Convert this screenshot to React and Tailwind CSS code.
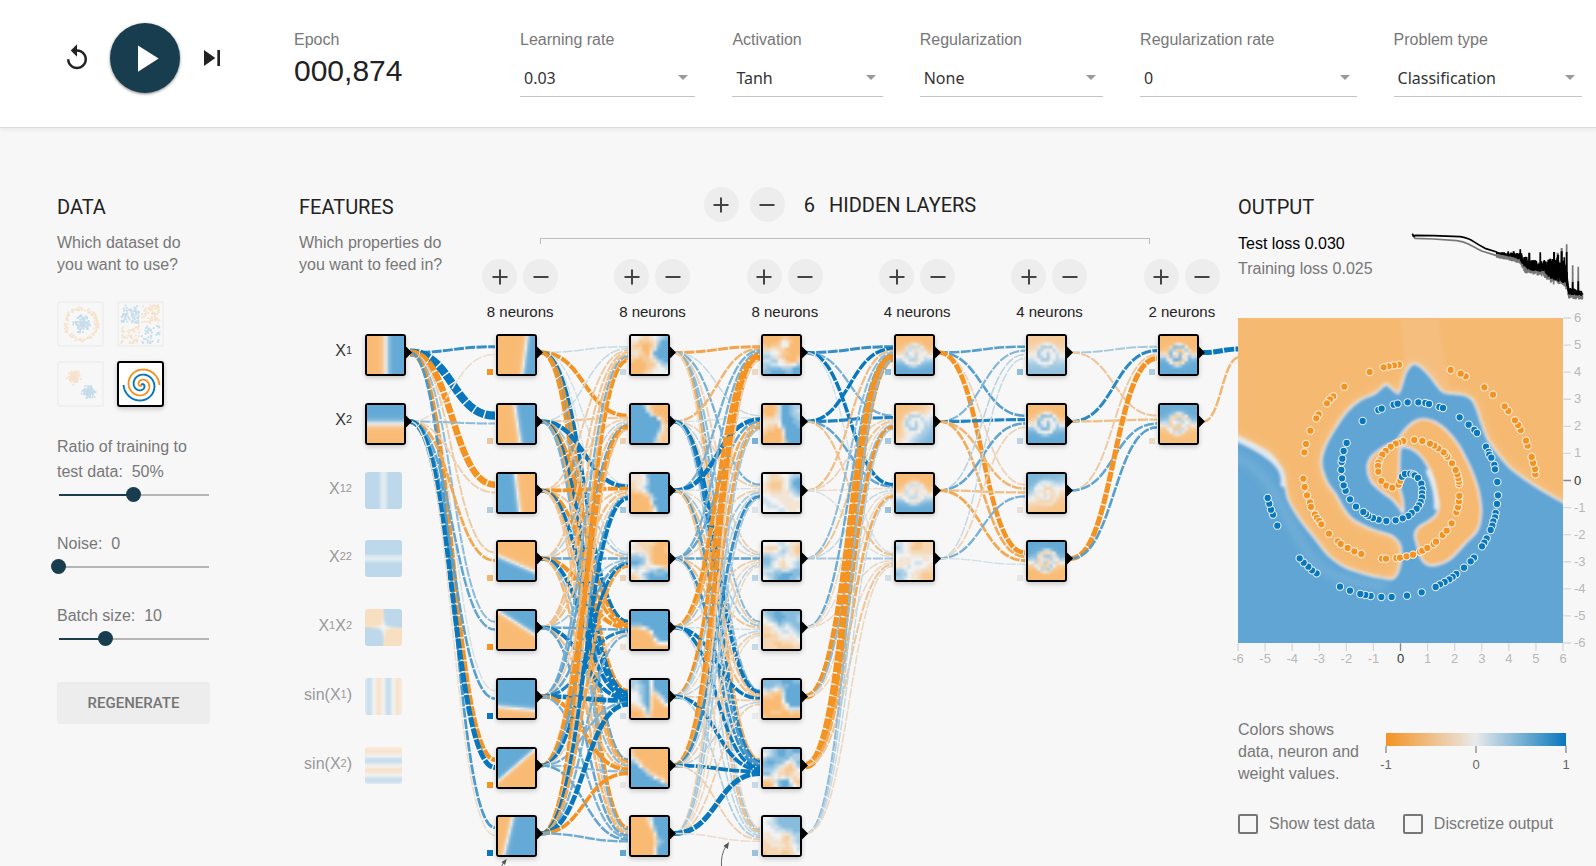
import React, { useEffect, useRef } from "react";

const SANS = "font-['Liberation_Sans',Arial,sans-serif]";
const ROBOTO = "font-['Roboto',sans-serif]";

/* ---------- colour scales ---------- */
const ORANGE = [245, 147, 34];
const NEUTRAL = [232, 234, 235];
const BLUE = [8, 119, 189];

function scaleColor(v, fade = 1) {
  const t = Math.max(-1, Math.min(1, v));
  const end = t < 0 ? ORANGE : BLUE;
  const k = Math.abs(t);
  return NEUTRAL.map((c, i) => {
    const value = c + (end[i] - c) * k;
    return Math.round(value * fade + 255 * (1 - fade));
  });
}
const css = (rgb) => `rgb(${rgb[0]},${rgb[1]},${rgb[2]})`;

/* ---------- deterministic noise ---------- */
function makeRandom(seed) {
  let s = seed;
  return () => {
    s = (s * 16807) % 2147483647;
    return s / 2147483647;
  };
}

/* ---------- heat maps ---------- */
const fromFunction = (fn, size = 18) => {
  const rows = [];
  for (let j = 0; j < size; j++) {
    const row = [];
    for (let i = 0; i < size; i++) {
      row.push(fn((2 * (i + 0.5)) / size - 1, 1 - (2 * (j + 0.5)) / size));
    }
    rows.push(row);
  }
  return rows;
};
const fromRows = (text) => text.split(" ").map((r) => [...r].map((c) => (Number(c) - 4) / 4));
const edge = (fn, k = 7) => fromFunction((x, y) => Math.tanh(k * fn(x, y)));

/* A spiral of the given strength in the middle of a softly split background. */
const swirl = ({ sign = 1, amp = 0.9, offset = 0, background }) =>
  fromFunction((x, y) => {
    const cx = x + 0.02;
    const r = Math.hypot(cx, y);
    const wave = Math.cos(Math.atan2(cx, y) - 4.2 * Math.PI * r);
    const inside = 1 / (1 + Math.exp((r - 0.62) * 16));
    return sign * (inside * (amp * wave + offset) + (1 - inside) * background(x, y));
  }, 12);

function HeatMap({ grid }) {
  const ref = useRef(null);
  useEffect(() => {
    const ctx = ref.current.getContext("2d");
    const image = ctx.createImageData(grid[0].length, grid.length);
    let n = 0;
    grid.forEach((row) =>
      row.forEach((v) => {
        const [r, g, b] = scaleColor(v, 0.627);
        image.data[n++] = r;
        image.data[n++] = g;
        image.data[n++] = b;
        image.data[n++] = 255;
      })
    );
    ctx.putImageData(image, 0, 0);
  }, [grid]);
  return <canvas ref={ref} width={grid[0].length} height={grid.length} className="block h-full w-full" />;
}

/* ---------- network data ---------- */
const ROWS = [334, 403, 472, 540, 609, 678, 747, 815];
const COLS = [365, 496, 629, 761, 894, 1026, 1158];
const NODE = 41;

const FEATURES = [
  { name: "X1", label: ["X", "1"], on: true, grid: edge((x) => x - 0.02, 5) },
  { name: "X2", label: ["X", "2"], on: true, grid: edge((x, y) => y - 0.02, 5) },
  { name: "X1 squared", label: ["X", "12"], on: false, grid: fromFunction((x) => Math.min(1, 0.35 + 9 * x * x)) },
  { name: "X2 squared", label: ["X", "22"], on: false, grid: fromFunction((x, y) => Math.min(1, 0.35 + 9 * y * y)) },
  { name: "X1 X2", label: ["X", "1", "X", "2"], on: false, grid: fromFunction((x, y) => Math.tanh(40 * x * y)) },
  { name: "sin X1", label: ["sin(X", "1", ")"], on: false, grid: fromFunction((x) => 0.8 * Math.sin(6 * x)) },
  { name: "sin X2", label: ["sin(X", "2", ")"], on: false, grid: fromFunction((x, y) => 0.8 * Math.sin(6 * y)) },
];

const LAYERS = [
  {
    bias: [-1, -0.4, 0.25, -0.6, -1, 1, -1, 1],
    weights: [
      [0.8, 3.2, -2.4, -0.35, 0.4, 0.1, -1.5, 0.7],
      [-0.15, 0.4, -0.3, -0.75, 0.6, 0.65, 1.7, -0.15],
    ],
    maps: [
      edge((x, y) => x - 0.45 - 0.13 * y),
      edge((x, y) => x - 0.05 + 0.15 * y),
      edge((x, y) => -(x - 0.05 + 0.12 * y)),
      edge((x, y) => -(y + 0.15 + 0.42 * x)),
      edge((x, y) => y - 0.37 + 0.62 * x),
      edge((x, y) => y + 0.5 + 0.09 * x),
      edge((x, y) => y - 0.15 - 0.84 * x),
      edge((x, y) => x + 0.44 - 0.24 * y),
    ],
  },
  {
    bias: [0.15, -0.3, 0.3, -0.3, -0.12, 0.1, -0.05, 0.6],
    weights: [
      [0.15, -1.3, 0.1, 0.1, 1.2, -1, 0.6, -1],
      [0.15, -0.4, 1.5, 0.3, -1, 1.1, -0.8, 0.5],
      [-0.35, -0.3, -1.2, -0.4, -1, 1.2, -0.6, -0.4],
      [-0.4, 0.2, -0.4, 0.6, -1.4, 1.3, 0.4, -0.6],
      [-0.5, -0.4, -0.5, 0.3, 0.6, 1.3, -0.5, 0.6],
      [0.5, 0.6, -0.3, 0.6, 0.9, 1.6, -1.3, 0.5],
      [-0.6, -1.5, 0.6, 1, -0.3, 0.5, 0.4, 0.6],
      [-1, -0.5, 1.2, -0.8, 0.5, 1.6, -1.1, 0.55],
    ],
    maps: [
      "4432234567 3311123688 2110013788 2220025888 3321038888 2211136888 1001123678 0000112466 0000123445 0001234444",
      "8887310000 8888520000 8888851000 8888888410 8888888820 8888888832 8888888731 8888888521 8888887311 8888886211",
      "3334788888 3334688888 2334688888 2345788888 1224688888 0001268888 0000057888 0000038888 0000016888 0000014888",
      "4322221000 3332210001 4333210001 6655310000 7776310000 8876420000 6653344321 4544566776 2346787778 1235788888",
      "8888888888 8888888888 8888888888 7778888888 1124688888 0000148888 0000017888 0000004788 0000001444 0000000000",
      "6678848888 6567848888 5567837888 4467832688 4457821368 4457820147 2346820014 1124720000 0002610000 0001510000",
      "1000000000 2000000000 5200000000 7520000000 8841000000 8886200000 8888621000 8888874210 8888888741 8888888887",
      "0000258888 0000148888 0000037888 0000016888 0000003888 0000002788 0000002678 0000002788 0000003888 0000003888",
    ].map(fromRows),
  },
  {
    bias: [-0.2, 0.5, 0.05, 0.2, 0.15, 0, 0.15, 0.35],
    weights: [
      [-0.8, 0.15, 0.5, -0.3, 0.4, 0.5, -0.7, -0.2],
      [-0.6, 0.1, -0.3, 0.2, -0.3, 1.2, 0.9, 0.3],
      [0.5, 1.5, 0.1, -0.2, 0.3, -0.5, 0.7, -0.5],
      [0.5, 0.6, -0.3, 0.6, -0.4, -0.5, 0.8, 0.2],
      [-1.3, -0.7, 0.3, -0.3, 0.12, 1, 1, 0.2],
      [-1.1, 0.3, 0.2, -0.2, 0.2, -0.35, 1.2, 0.25],
      [-1.5, -0.8, 0.8, 0.2, -0.3, 0.2, 1.1, -0.3],
      [-0.3, 0.3, 0.3, -0.2, -0.2, -0.3, 1.8, -0.15],
    ],
    maps: [
      "0000011000 0000143100 1011244000 2233220000 5544311000 6653210001 5566431002 6655443346 6777766688 7788887788",
      "1001588766 0001588765 1002588766 2223588876 3333488877 3221478887 2110058888 1000038888 0000028888 0000027888",
      "4322344566 4322234678 3211134688 3211134678 3322233567 4433333456 5444333344 5544433333 4555443333 4444554334",
      "4444554332 3222455321 3334565321 6655554332 7765434445 7754324456 6654323456 5556655677 5667788877 4567888776",
      "6778877777 5678887776 4567877776 3445765677 2234554567 2233455456 1122344345 2222333334 2221122233 2222111122",
      "7777788877 7776677888 5654268888 3211158888 1110058888 0000048888 0000024888 0000013555 0011100211 1000000000",
      "5567887788 4567887766 6777777566 7887764357 7776532136 6665321124 7754221233 4334345323 1125788421 0014788642",
      "4456777777 4556777777 4455677777 4445556677 3344433566 3334421356 2333322356 2233332345 2222322245 1222211234",
    ].map(fromRows),
  },
  {
    bias: [0.4, 0.3, 0.35, 0.1],
    weights: [
      [0.8, 0.5, 1.1, 0.1],
      [1, 0.9, 0.6, -0.45],
      [-0.5, -0.25, -0.15, 0.1],
      [0.4, -0.4, 0.15, 0.3],
      [0.55, -0.2, -0.15, -0.2],
      [-2, 0.4, -0.2, -0.2],
      [-2.8, -1.2, -0.7, -0.4],
      [0.4, 0.25, 0.15, -0.2],
    ],
    maps: [
      swirl({ amp: 0.4, offset: 0.05, background: (x, y) => -Math.tanh(3 * (y + 0.1)) }),
      swirl({ amp: 0.35, offset: 0.2, background: (x, y) => -Math.tanh(1.6 * (0.7 * y - 0.75 * x + 0.3)) * 0.9 }),
      swirl({ amp: 0.35, offset: 0, background: (x, y) => -Math.tanh(3 * (y + 0.15)) }),
      fromRows(
        "5543211222 6543111222 5543222222 4444333333 4333444334 3333455443 3345444432 6654433222 7664332111 6654332111"
      ),
    ],
  },
  {
    bias: [0.4, 0.2, -0.1, -0.05],
    weights: [
      [0.65, 0.65, -0.25, -1.6],
      [0.45, 0.9, -0.6, -0.7],
      [0.2, 0.6, -0.5, -0.75],
      [0.15, -0.25, 0.5, 0.1],
    ],
    maps: [
      swirl({ amp: 0.4, offset: 0.2, background: (x, y) => -Math.tanh(2.2 * (y + 0.05)) * 0.7 }),
      swirl({ amp: 0.55, offset: 0.3, background: (x, y) => -Math.tanh(3.5 * (y + 0.05)) }),
      swirl({ amp: 0.35, offset: -0.2, background: (x, y) => Math.tanh(2 * (y - 0.35 * x)) * 0.85 }),
      swirl({ sign: -1, amp: 0.65, offset: 0.05, background: (x, y) => -Math.tanh(4 * (y + 0.05)) }),
    ],
  },
  {
    bias: [0.25, -0.2],
    weights: [
      [0.3, -0.4],
      [0.85, -0.5],
      [-0.35, 0.6],
      [-1.8, 0.65],
    ],
    maps: [
      swirl({ amp: 0.85, offset: 0.1, background: (x, y) => -Math.tanh(5 * (y + 0.02)) }),
      swirl({ sign: -1, amp: 0.6, offset: 0.15, background: (x, y) => -Math.tanh(4 * (y + 0.02)) * 0.95 }),
    ],
  },
];

const centerY = (row) => ROWS[row] + NODE / 2;

function linkPath(x1, y1, x2, y2) {
  const mid = (x1 + x2) / 2;
  return `M${x1},${y1}C${mid},${y1} ${mid},${y2} ${x2},${y2}`;
}

function buildLinks() {
  const links = [];
  LAYERS.forEach((layer, l) => {
    const count = layer.weights.length;
    layer.weights.forEach((row, i) =>
      row.forEach((w, j) => {
        const y2 = centerY(j) + ((i - count / 2) / count) * 15.6;
        links.push({ w, d: linkPath(COLS[l] + NODE + 4, centerY(i) - 2, COLS[l + 1] - 1, y2), key: `${l}-${i}-${j}` });
      })
    );
  });
  links.push({ w: 1.7, d: linkPath(1203, centerY(0) - 2, 1240, 349), key: "out-0" });
  links.push({ w: -0.6, d: linkPath(1203, centerY(1) - 2, 1240, 357), key: "out-1" });
  return links;
}
const LINKS = buildLinks();

function Marker({ x, y }) {
  return <path d={`M${x},${y - 7}L${x + 7},${y}L${x},${y + 7}Z`} fill="#000" />;
}

function Diagram() {
  return (
    <div className="relative mt-[13px] h-[532px] overflow-hidden">
      <svg className="absolute top-0 left-0" width="941" height="532" viewBox="299 334 941 532" aria-hidden="true">
        {LINKS.map(({ w, d, key }) => (
          <path
            key={key}
            d={d}
            fill="none"
            stroke={css(scaleColor(w))}
            strokeWidth={1.2 + Math.abs(w) * 2.2}
            strokeDasharray="10 1.4"
            strokeDashoffset={1.3}
          />
        ))}
        {FEATURES.filter((f) => f.on).map((f, i) => (
          <Marker key={f.name} x={COLS[0] + NODE - 1} y={centerY(i) - 2} />
        ))}
        {LAYERS.map((layer, l) =>
          layer.maps.map((_, i) => (
            <g key={`${l}-${i}`}>
              <Marker x={COLS[l + 1] + NODE - 1} y={centerY(i) - 2} />
              <rect x={COLS[l + 1] - 9} y={ROWS[i] + 35} width="6" height="6" fill={css(scaleColor(layer.bias[i]))} />
            </g>
          ))
        )}
        <g stroke="#666" strokeWidth="1" fill="none">
          <path d="M501,867L504,862" />
          <path d="M721.500,867Q720.500,855 726,846" />
        </g>
        <path d="M506.700,859L505,865L501.500,862Z" fill="#555" />
        <path d="M729,842L727.800,849L723.500,846Z" fill="#555" />
      </svg>

      {FEATURES.map((f, i) => (
        <div
          key={f.name}
          className="absolute left-0 flex items-start"
          style={{ top: ROWS[i] - 334 }}
        >
          <span
            id={`feature-${i}`}
            className={`w-[53px] pt-[7px] text-right text-[16px] leading-5 whitespace-nowrap ${f.on ? "text-[#333]" : "text-[#999]"}`}
          >
            {f.label.map((part, k) =>
              /^\d/.test(part) ? (
                <span key={k} className="align-[2px] text-[11px] leading-none">
                  {part}
                </span>
              ) : (
                part
              )
            )}
          </span>
          <button
            type="button"
            aria-labelledby={`feature-${i}`}
            aria-pressed={f.on}
            className={
              f.on
                ? "ml-[13px] block h-[42px] w-[41px] overflow-hidden rounded-[3px] border-2 border-black shadow-[0_2px_5px_rgba(0,0,0,0.2)]"
                : "ml-[13px] block size-[37px] overflow-hidden rounded-[3px] opacity-40"
            }
          >
            <HeatMap grid={f.grid} />
          </button>
        </div>
      ))}

      {LAYERS.map((layer, l) =>
        layer.maps.map((grid, i) => (
          <div
            key={`${l}-${i}`}
            className="absolute h-[42px] w-[41px] overflow-hidden rounded-[3px] border-2 border-black shadow-[0_2px_5px_rgba(0,0,0,0.2)]"
            style={{ left: COLS[l + 1] - 299, top: ROWS[i] - 334 }}
          >
            <HeatMap grid={grid} />
          </div>
        ))
      )}
    </div>
  );
}

/* ---------- controls ---------- */
function RoundButton({ kind, label }) {
  return (
    <button
      type="button"
      aria-label={label}
      className="flex size-[35px] items-center justify-center rounded-full bg-[#ededed]"
    >
      <svg width="16" height="16" viewBox="0 0 16 16" stroke="#444" strokeWidth="2" aria-hidden="true">
        <path d="M0.500 8h15" />
        {kind === "plus" && <path d="M8 0.500v15" />}
      </svg>
    </button>
  );
}

function Field({ id, label, value }) {
  return (
    <div className="min-w-0">
      <label htmlFor={id} className="block text-[16px] leading-5 whitespace-nowrap text-[#777]">
        {label}
      </label>
      <div className="relative mt-[10px]">
        <select
          id={id}
          defaultValue={value}
          className="block h-[37px] w-full appearance-none rounded-none border-b border-[#c4c4c4] bg-transparent pl-1 font-['Noto_Sans','Open_Sans',sans-serif] text-[16px] text-[#333]"
        >
          <option>{value}</option>
        </select>
        <svg className="pointer-events-none absolute top-[15px] right-[7px]" width="10" height="5" viewBox="0 0 10 5" aria-hidden="true">
          <path d="M0 0h10L5 5z" fill="#999" />
        </svg>
      </div>
    </div>
  );
}

function Slider({ id, label, value, min, max, current, className }) {
  const share = ((current - min) / (max - min)) * 100;
  return (
    <div className={className}>
      <label htmlFor={id} className="block text-[16px] leading-[25px] text-[#777]">
        {label}&nbsp; {value}
      </label>
      <input
        id={id}
        type="range"
        min={min}
        max={max}
        defaultValue={current}
        className="mt-[3px] -ml-[6px] block h-[15px] w-[165px] appearance-none bg-[linear-gradient(to_right,#183d4e_var(--share),#b5b5b5_var(--share))] bg-[length:150px_2px] bg-center bg-no-repeat [&::-webkit-slider-thumb]:size-[15px] [&::-webkit-slider-thumb]:appearance-none [&::-webkit-slider-thumb]:rounded-full [&::-webkit-slider-thumb]:bg-[#183d4e]"
        style={{ "--share": `${share}%` }}
      />
    </div>
  );
}

/* ---------- dataset thumbnails ---------- */
function buildDatasets() {
  const rnd = makeRandom(77);
  const circle = [];
  const xor = [];
  const gauss = [];
  for (let i = 0; i < 110; i++) {
    const a = rnd() * Math.PI * 2;
    const r = 13.5 + rnd() * 4;
    circle.push({ x: 24 + r * Math.cos(a), y: 23 + r * Math.sin(a), c: "#f59322" });
    const b = rnd() * Math.PI * 2;
    const q = rnd() * 9;
    circle.push({ x: 25 + q * Math.cos(b), y: 23 + q * Math.sin(b), c: "#0877bd" });
  }
  for (let i = 0; i < 240; i++) {
    const x = rnd() * 36 + 5;
    const y = rnd() * 36 + 5;
    const gx = x + (x > 23 ? 1.5 : -1);
    const gy = y + (y > 23 ? 1.5 : -1);
    xor.push({ x: gx, y: gy, c: x > 23 === y > 23 ? "#0877bd" : "#f59322" });
  }
  for (let i = 0; i < 110; i++) {
    const g = () => (rnd() + rnd() + rnd() - 1.5) * 5.5;
    gauss.push({ x: 17 + g(), y: 16 + g(), c: "#f59322" });
    gauss.push({ x: 32 + g(), y: 31 + g(), c: "#0877bd" });
  }
  return { circle, xor, gauss };
}
const DATASETS = buildDatasets();

function spiral(phase) {
  let d = "";
  for (let i = 0; i <= 90; i++) {
    const r = (i / 90) * 18;
    const t = (1.75 * i * 2 * Math.PI) / 90 + phase;
    d += `${i ? "L" : "M"}${(24.5 + r * Math.sin(t)).toFixed(2)},${(24 - r * Math.cos(t)).toFixed(2)}`;
  }
  return d;
}

function Thumb({ name, points }) {
  const active = !points;
  return (
    <button
      type="button"
      aria-label={name}
      aria-pressed={active}
      className={
        active
          ? "h-[46px] w-[47px] overflow-hidden rounded-[3px] border-2 border-black bg-white shadow-[0_2px_5px_rgba(0,0,0,0.2)]"
          : "h-[46px] w-[47px] overflow-hidden rounded-[3px] border-2 border-[#f0f0f0]"
      }
    >
      {active ? (
        <svg className="block" width="43" height="42" viewBox="2 2 43 42" fill="none" strokeWidth="1.9" aria-hidden="true">
          <path d={spiral(0)} stroke="#0877bd" />
          <path d={spiral(Math.PI)} stroke="#f59322" />
        </svg>
      ) : (
        <svg className="block opacity-20" width="43" height="42" viewBox="2 2 43 42" aria-hidden="true">
          {points.map((p, i) => (
            <rect key={i} x={p.x - 0.8} y={p.y - 0.8} width="1.8" height="1.8" fill={p.c} />
          ))}
        </svg>
      )}
    </button>
  );
}

/* ---------- loss chart ---------- */
const ENVELOPE = [
  [290, 95, 102],
  [320, 97, 108],
  [345, 97, 114],
  [362, 98, 124],
  [375, 108, 148],
  [400, 120, 154],
  [430, 122, 158],
  [450, 118, 176],
  [470, 112, 186],
  [495, 122, 190],
  [501, 150, 206],
  [506, 200, 224],
  [525, 206, 226],
  [548, 212, 228],
];
function envelopeAt(x) {
  for (let i = 1; i < ENVELOPE.length; i++) {
    const a = ENVELOPE[i - 1];
    const b = ENVELOPE[i];
    if (x <= b[0]) {
      const t = (x - a[0]) / (b[0] - a[0]);
      return [a[1] + (b[1] - a[1]) * t, a[2] + (b[2] - a[2]) * t];
    }
  }
  return [212, 228];
}
function noisy(start, seed, shift, spikes) {
  const rnd = makeRandom(seed);
  let d = start;
  for (let x = 290; x <= 547; x += 1.2) {
    const [hi, lo] = envelopeAt(x);
    const spike = spikes.find((s) => Math.abs(s[0] - x) <= 0.9);
    d += `L${x.toFixed(1)},${(spike ? spike[1] : hi + rnd() * (lo - hi) * 0.6 + shift * 0.5).toFixed(1)}`;
    d += `L${(x + 0.6).toFixed(1)},${(lo - rnd() * (lo - hi) * 0.35 + shift).toFixed(1)}`;
  }
  return d;
}
const TRAIN_LOSS = noisy("M38,45L45,55L100,57L170,62Q190,64 205,72T245,93L290,107", 41, 12, [
  [451, 116],
  [473, 98],
  [485, 84],
  [500, 73],
  [518, 136],
  [535, 140],
]);
const TEST_LOSS = noisy("M37,41L41,50L45,46L100,47L180,50Q205,54 220,64T255,85L290,96", 99, 0, [
  [325, 94],
  [341, 94],
  [361, 88],
  [388, 98],
  [405, 120],
  [421, 97],
  [433, 120],
  [451, 116],
  [462, 96],
  [474, 104],
  [485, 94],
  [493, 112],
  [500, 96],
  [518, 186],
  [535, 184],
]);

function LossChart() {
  return (
    <svg className="mt-[25px] shrink-0" width="190" height="90" viewBox="0 0 570 270" fill="none" strokeLinejoin="bevel" role="img" aria-label="Loss history">
      <path d={TRAIN_LOSS} stroke="#777" strokeWidth="5" />
      <path d={TEST_LOSS} stroke="#000" strokeWidth="5" />
    </svg>
  );
}

/* ---------- output plot ---------- */
const ORANGE_POINTS =
  "946,523 945,507 939,489 935,471 923,437 918,422 902,390 894,375 885,361 865,333 854,319 819,284 793,262 737,229 722,221 692,210 537,194 522,196 506,199 491,202 449,216 373,260 340,289 330,298 321,310 296,343 289,355 271,392 258,432 253,457 250,536 254,561 261,586 270,607 273,621 285,643 291,654 298,663 304,673 327,701 354,724 362,732 383,744 403,754 424,762 486,776 498,776 529,774 540,773 560,769 579,764 600,755 607,752 622,744 641,732 648,725 668,705 680,692 695,670 709,637 714,622 717,604 718,588 717,553 717,545 715,535 712,523 707,510 696,490 682,470 676,462 671,457 655,445 643,437 630,431 607,423 583,420 550,423 535,428 527,431 512,440 497,453 487,464 479,481 475,488 474,498 475,515 484,543 499,557 517,563 536,554 541,542";
const BLUE_POINTS =
  "546,530 555,522 571,521 580,523 584,526 594,534 604,551 607,568 606,580 606,592 602,606 597,616 590,626 575,639 565,648 548,655 527,661 499,663 476,659 459,654 445,648 438,642 430,636 408,620 390,598 377,572 371,556 366,535 364,510 365,486 367,476 371,453 380,429 428,363 475,330 485,326 521,314 533,311 563,307 595,307 616,309 627,312 658,321 669,324 719,352 746,374 763,390 771,399 798,440 806,456 808,464 814,473 823,495 825,508 832,546 834,586 831,612 827,639 825,652 820,664 817,677 812,690 800,715 793,728 786,739 762,773 752,784 732,803 709,822 698,831 688,838 674,846 660,853 647,861 605,877 561,887 515,891 484,891 452,888 436,885 421,882 390,872 360,860 290,820 276,811 265,800 251,788 239,775 172,677 159,644 153,629 148,611 143,594";
const parsePoints = (text) => text.split(" ").map((p) => p.split(",").map(Number));

/* Closed smooth curve through the given points. */
function smooth(text) {
  const p = parsePoints(text);
  const n = p.length;
  let d = `M${p[0]}`;
  for (let i = 0; i < n; i++) {
    const a = p[(i + n - 1) % n];
    const b = p[i];
    const c = p[(i + 1) % n];
    const e = p[(i + 2) % n];
    d += `C${b[0] + (c[0] - a[0]) / 6},${b[1] + (c[1] - a[1]) / 6} ${c[0] - (e[0] - b[0]) / 6},${c[1] - (e[1] - b[1]) / 6} ${c}`;
  }
  return `${d}Z`;
}

const OUTER_BLUE = smooth(
  "0,385 54,410 100,432 150,462 180,500 194,545 205,597 235,650 285,715 325,765 370,798 430,820 490,834 520,835 536,810 543,770 540,735 515,708 460,690 400,660 372,628 348,585 320,545 304,490 315,440 345,385 380,335 420,300 465,280 485,262 500,253 518,268 535,279 545,255 558,215 580,191 602,200 630,228 668,274 700,280 735,285 758,301 772,330 785,370 805,420 835,462 870,502 920,540 970,572 1029,606 1090,640 1100,1080 600,1120 -40,1080 -60,600"
);
const INNER_ORANGE = smooth(
  "543,405 562,382 585,364 610,357 645,366 680,392 715,435 742,485 762,530 777,580 783,640 772,690 735,730 710,758 685,780 655,793 625,794 604,775 592,735 585,705 596,682 625,664 648,645 656,620 650,580 640,535 622,495 600,465 575,446 548,440 540,450 538,500 540,565 548,600 549,638 538,622 515,596 480,570 452,540 443,500 455,470 490,442 528,424"
);

function OutputPlot() {
  const ticks = Array.from({ length: 13 }, (_, i) => i - 6);
  return (
    <svg className="mt-2 block overflow-visible" width="358" height="350" viewBox="54 54 1074 1050" role="img" aria-label="Network output">
      <defs>
        <clipPath id="plot-area">
          <rect x="54" y="54" width="975" height="975" />
        </clipPath>
        <filter id="soft" x="-5%" y="-5%" width="110%" height="110%">
          <feGaussianBlur stdDeviation="4" />
        </filter>
        <filter id="softer" x="-20%" y="-20%" width="140%" height="140%">
          <feGaussianBlur stdDeviation="12" />
        </filter>
      </defs>
      <g clipPath="url(#plot-area)">
        <rect x="54" y="54" width="975" height="975" fill="#f5b971" />
        <path d="M540,54H656L665,130L690,260H560Z" fill="#f5be7e" filter="url(#soft)" />
        <path d={OUTER_BLUE} fill="none" stroke="#f4cb9c" strokeWidth="12" filter="url(#softer)" />
        <g filter="url(#soft)" stroke="#f0f2f2" strokeWidth="5">
          <path d={OUTER_BLUE} fill="#60a5d4" />
          <path d="M20,405Q110,440 155,478T188,560" fill="none" stroke="#dfe9f0" strokeWidth="14" />
          <path d={INNER_ORANGE} fill="#f5b971" />
          <path d="M622,510Q652,570 648,628" fill="none" stroke="#e3ecf2" strokeWidth="11" />
        </g>
        <path d="M20,460Q110,490 150,560T240,720T350,830T500,860" fill="none" stroke="#8fbfdf" strokeWidth="20" opacity="0.5" filter="url(#softer)" />
        <g fill="#f59322" stroke="#fdf1e4" strokeWidth="3.2">
          {parsePoints(ORANGE_POINTS).map(([x, y], i) => (
            <circle key={i} cx={x} cy={y} r="11" />
          ))}
        </g>
        <g fill="#0877bd" stroke="#e8f2f8" strokeWidth="3.2">
          {parsePoints(BLUE_POINTS).map(([x, y], i) => (
            <circle key={i} cx={x} cy={y} r="11" />
          ))}
        </g>
      </g>
      <g fontSize="39" fontFamily="'Liberation Sans', Arial, sans-serif">
        {ticks.map((t) => {
          const x = 541.5 + t * 81.25;
          const y = 541.5 - t * 81.25;
          const line = t === 0 ? "#888" : "#d8d8d8";
          const text = t === 0 ? "#333" : "#b8b8b8";
          return (
            <g key={t}>
              <path d={`M${x},1030V1053M1030,${y}H1053`} stroke={line} strokeWidth="4" />
              <text x={x} y="1088" textAnchor="middle" fill={text}>
                {t}
              </text>
              <text x="1062" y={y + 12} fill={text}>
                {t}
              </text>
            </g>
          );
        })}
      </g>
    </svg>
  );
}

function Legend() {
  return (
    <svg className="mt-[14px] overflow-visible" width="181" height="40" viewBox="0 0 181 40" role="img" aria-label="Colour scale">
      <defs>
        <linearGradient id="scale">
          <stop offset="0" stopColor="#f59322" />
          <stop offset="0.500" stopColor="#e8eaeb" />
          <stop offset="1" stopColor="#0877bd" />
        </linearGradient>
      </defs>
      <rect x="0" y="0" width="180" height="13" fill="url(#scale)" />
      <path d="M0 13v7M90 13v7M180 13v7" stroke="#666" />
      <g fontSize="13" fill="#666" textAnchor="middle" fontFamily="'Liberation Sans', Arial, sans-serif">
        <text x="0" y="36">-1</text>
        <text x="90" y="36">0</text>
        <text x="180" y="36">1</text>
      </g>
    </svg>
  );
}

function CheckBox({ id, label }) {
  return (
    <div className="flex items-center gap-[11px]">
      <input id={id} type="checkbox" className="size-5 appearance-none rounded-[2px] border-2 border-[#777] bg-transparent" />
      <label htmlFor={id} className="text-[16px] leading-5 whitespace-nowrap text-[#777]">
        {label}
      </label>
    </div>
  );
}

const heading = `${ROBOTO} text-[20px] leading-6 text-[#222]`;

export default function App() {
  return (
    <div className={`min-h-screen overflow-hidden bg-[#f7f7f7] ${SANS}`}>
      <header className="relative flex h-[128px] items-start border-b border-[#dcdcdc] bg-white pr-[14px] pl-[62px] shadow-[0_1px_5px_rgba(0,0,0,0.08)]">
        <div className="flex w-[232px] items-center pt-[23px]">
          <button type="button" aria-label="Reset">
            <svg width="30" height="30" viewBox="0 0 24 24" fill="#222" aria-hidden="true">
              <path d="M12 5V1L7 6l5 5V7c3.310 0 6 2.690 6 6s-2.690 6-6 6-6-2.690-6-6H4c0 4.420 3.580 8 8 8s8-3.580 8-8-3.580-8-8-8z" />
            </svg>
          </button>
          <button
            type="button"
            aria-label="Run"
            className="ml-[18px] flex size-[70px] items-center justify-center rounded-full bg-[#183d4e] shadow-[0_1px_3px_rgba(0,0,0,0.5)]"
          >
            <svg width="45" height="45" viewBox="0 0 24 24" fill="#fff" aria-hidden="true">
              <path d="M8 5v14l11-7z" />
            </svg>
          </button>
          <button type="button" aria-label="Step" className="ml-4">
            <svg width="32" height="32" viewBox="0 0 24 24" fill="#222" aria-hidden="true">
              <path d="M6 18l8.500-6L6 6v12zM16 6v12h2V6h-2z" />
            </svg>
          </button>
        </div>
        <div className="w-[226px] pt-[30px]">
          <div className="text-[16px] leading-5 text-[#777]">Epoch</div>
          <div className="mt-[3px] text-[30px] leading-9 text-[#222]">000,874</div>
        </div>
        <div className="grid flex-1 grid-cols-[175fr_150fr_183fr_216fr_188fr] gap-x-[37px] pt-[30px]">
          <Field id="learning-rate" label="Learning rate" value="0.03" />
          <Field id="activation" label="Activation" value="Tanh" />
          <Field id="regularization" label="Regularization" value="None" />
          <Field id="regularization-rate" label="Regularization rate" value="0" />
          <Field id="problem-type" label="Problem type" value="Classification" />
        </div>
      </header>

      <main className="flex items-start pl-[57px]">
        <aside className="w-[153px] shrink-0 pt-[67px]">
          <h2 className={heading}>DATA</h2>
          <p className="mt-[13px] text-[16px] leading-[22px] text-[#777]">
            Which dataset do
            <br />
            you want to use?
          </p>
          <div className="mt-[25px] grid w-[107px] grid-cols-2 gap-x-[13px] gap-y-[14px]">
            <Thumb name="Circle" points={DATASETS.circle} />
            <Thumb name="Exclusive or" points={DATASETS.xor} />
            <Thumb name="Gaussian" points={DATASETS.gauss} />
            <Thumb name="Spiral" />
          </div>
          <Slider
            id="ratio"
            className="mt-[27px]"
            label={
              <>
                Ratio of training to
                <br />
                test data:
              </>
            }
            value="50%"
            min={0}
            max={100}
            current={50}
          />
          <Slider id="noise" className="mt-[29px]" label="Noise:" value="0" min={0} max={50} current={0} />
          <Slider id="batch" className="mt-[29px]" label="Batch size:" value="10" min={1} max={30} current={10} />
          <button
            type="button"
            className={`mt-9 h-[42px] w-full rounded-[3px] bg-[#ededed] text-[15px] font-medium text-[#757575] ${ROBOTO}`}
          >
            REGENERATE
          </button>
        </aside>

        <section className="ml-[89px] min-w-0 flex-1">
          <div className="flex items-start">
            <div className="w-[155px] shrink-0 pt-[67px]">
              <h2 className={heading}>FEATURES</h2>
              <p className="mt-[13px] text-[16px] leading-[22px] whitespace-nowrap text-[#777]">
                Which properties do
                <br />
                you want to feed in?
              </p>
            </div>
            <div className="-mr-[10px] flex-1 pt-[59px]">
              <div className="flex items-center justify-center pr-[22px]">
                <RoundButton kind="plus" label="Add layer" />
                <div className="ml-[11px]">
                  <RoundButton kind="minus" label="Remove layer" />
                </div>
                <h2 className={`ml-[19px] flex gap-[14px] ${heading}`}>
                  <span>6</span>
                  <span>HIDDEN LAYERS</span>
                </h2>
              </div>
              <div className="mt-4 mr-[98px] ml-[86px] h-[6px] border-x border-t border-[#bdbdbd]" />
              <div className="mt-[15px] grid grid-cols-6">
                {LAYERS.map((layer, i) => (
                  <div key={i} className="flex flex-col items-center">
                    <div className="flex gap-[6px]">
                      <RoundButton kind="plus" label={`Add neuron to layer ${i + 1}`} />
                      <RoundButton kind="minus" label={`Remove neuron from layer ${i + 1}`} />
                    </div>
                    <div className="mt-[9px] text-[15px] leading-[18px] text-[#222]">{layer.maps.length} neurons</div>
                  </div>
                ))}
              </div>
            </div>
          </div>
          <Diagram />
        </section>

        <section className="relative w-[358px] shrink-0">
          <div className="flex items-start pt-[67px]">
            <div className="w-[162px] shrink-0">
              <h2 className={heading}>OUTPUT</h2>
              <div className="mt-3 text-[16px] leading-[25px] whitespace-nowrap">
                <div className="text-black">Test loss 0.030</div>
                <div className="text-[#777]">Training loss 0.025</div>
              </div>
            </div>
            <LossChart />
          </div>
          <OutputPlot />
          <div className="mt-[51px] flex items-start">
            <p className="w-[148px] shrink-0 text-[16px] leading-[22px] text-[#777]">
              Colors shows
              <br />
              data, neuron and
              <br />
              weight values.
            </p>
            <Legend />
          </div>
          <div className="mt-[29px] flex gap-[28px]">
            <CheckBox id="show-test" label="Show test data" />
            <CheckBox id="discretize" label="Discretize output" />
          </div>
        </section>
      </main>
    </div>
  );
}
